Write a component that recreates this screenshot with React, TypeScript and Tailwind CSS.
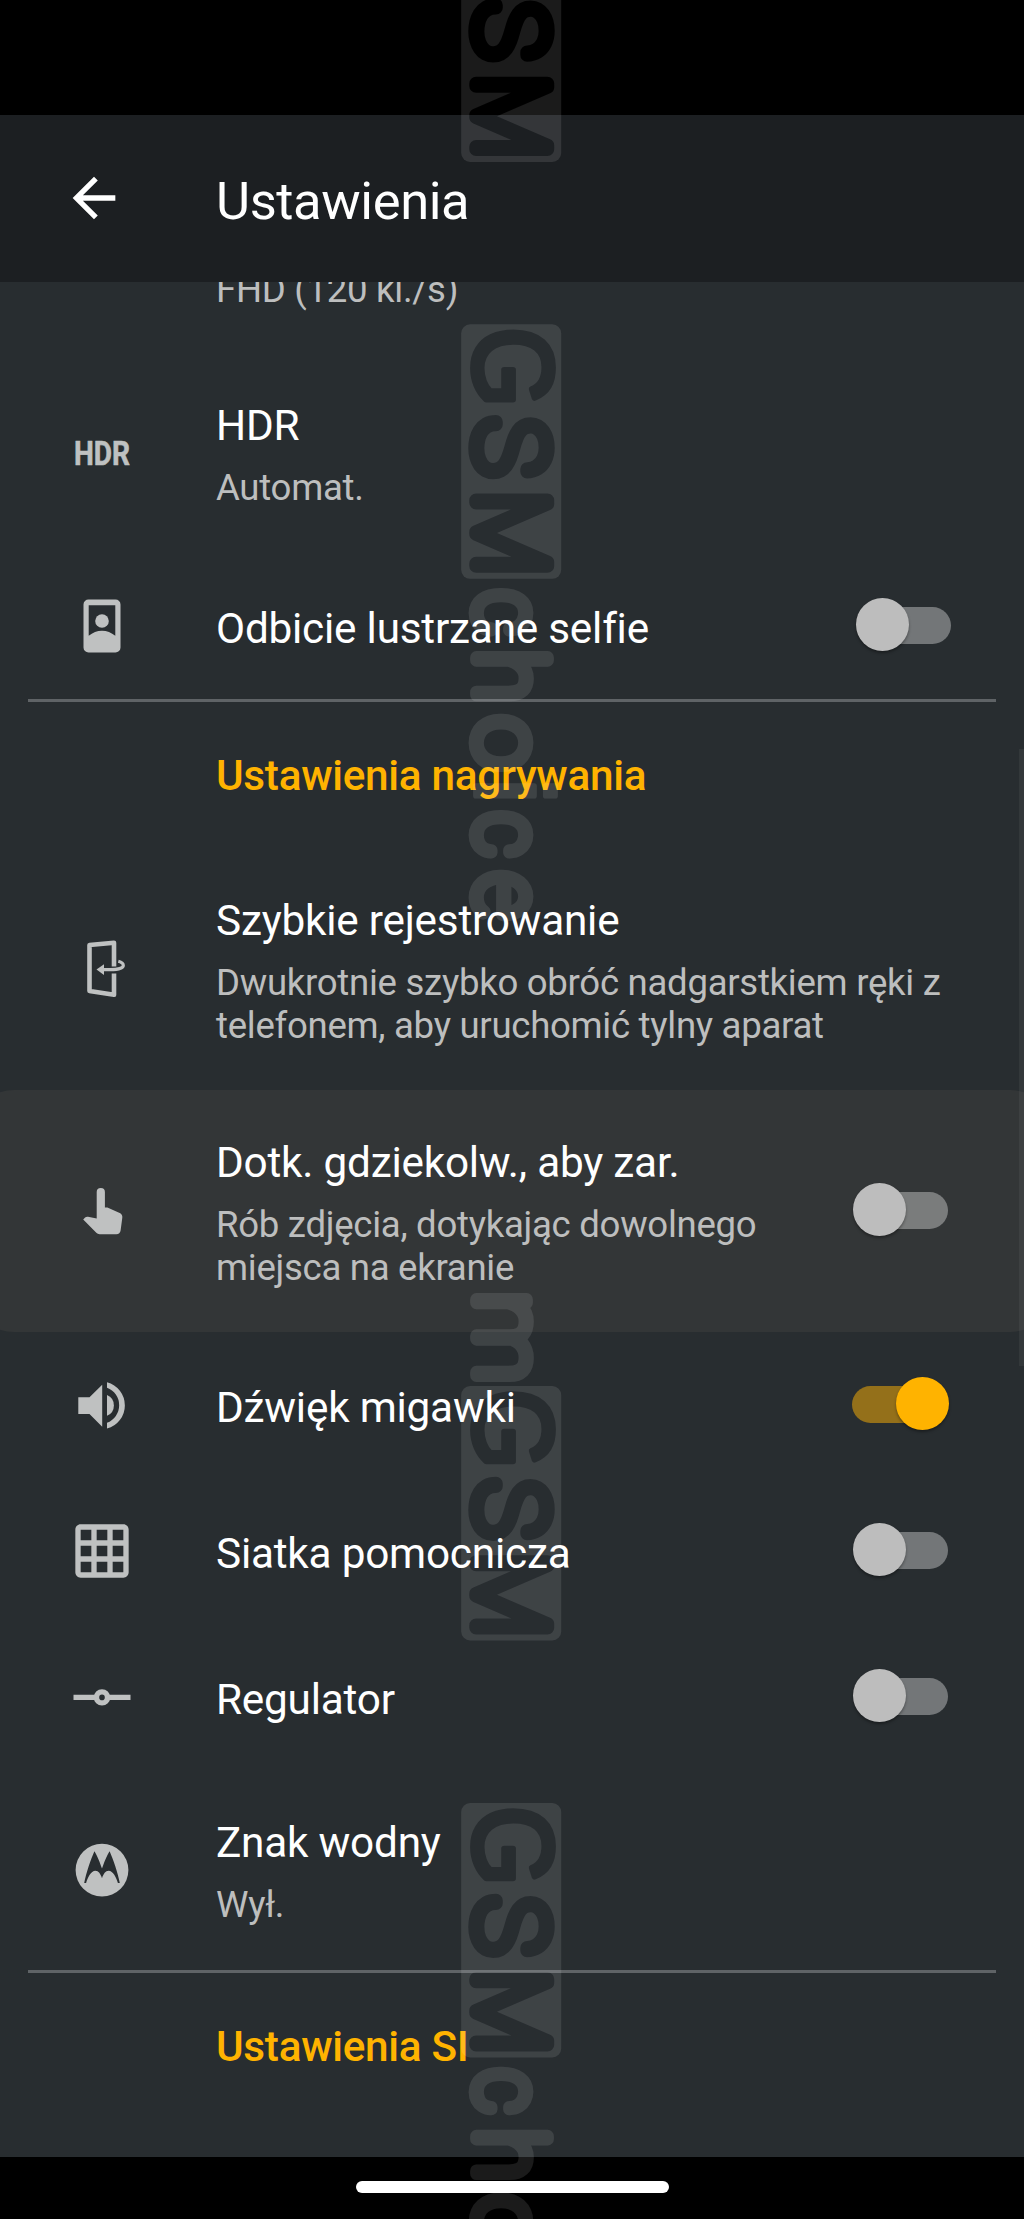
import React from "react";
import { MdArrowBack, MdGridOn } from "react-icons/md";

const ICON = "size-16 shrink-0 text-[#bfc1c1]";

function HdrIcon() {
  return (
    <svg viewBox="0 0 64 64" className={ICON} fill="currentColor">
      <text
        x="4"
        y="44"
        fontFamily="Roboto"
        fontWeight="700"
        fontSize="32.5"
        textLength="56"
        lengthAdjust="spacingAndGlyphs"
        stroke="currentColor"
        strokeWidth="0.6"
      >
        HDR
      </text>
    </svg>
  );
}

function PortraitIcon() {
  return (
    <svg viewBox="0 0 64 64" className={ICON} fill="currentColor">
      <path
        fillRule="evenodd"
        d="M18.500 5.500h27a5 5 0 0 1 5 5v43a5 5 0 0 1-5 5h-27a5 5 0 0 1-5-5v-43a5 5 0 0 1 5-5zM18.700 11.200v30.600c4-3.100 8.400-5 13.300-5s9.300 1.900 13.300 5V11.200z"
      />
      <circle cx="32" cy="27" r="6.800" />
    </svg>
  );
}

function FlipPhoneIcon() {
  return (
    <svg viewBox="0 0 64 64" className={ICON} fill="none" stroke="currentColor">
      <path d="M44 29.500V5.800L19.500 8v46L44 57.800V36.500" strokeWidth="4.600" strokeLinejoin="round" />
      <path d="M33 32.600h7c8 0 13.300-1.600 13.300-4.200 0-1.900-2-3.300-5-4.100" strokeWidth="3.200" />
      <path d="M26.500 32.600 34 27.200v10.800z" fill="currentColor" stroke="none" />
    </svg>
  );
}

function TouchIcon() {
  return (
    <svg viewBox="0 0 64 64" className={ICON} fill="currentColor">
      <path d="M26.700 13a4.100 4.100 0 0 1 8.200 0v15.500h2.500l12.300 5.500c2 1 2.900 2.600 2.600 4.800l-1.700 12.600c-.3 2.400-1.900 3.800-4.200 3.800H29.600c-1.300 0-2.400-.5-3.300-1.400L13.200 40.600l1.900-2c.8-.8 1.800-1.100 2.900-.9l8.700 1.800z" />
    </svg>
  );
}

function VolumeIcon() {
  return (
    <svg viewBox="0 0 64 64" className={ICON} fill="currentColor">
      <path d="M8.300 24.300h11.200L32.200 11.800v42L19.500 40.900H8.300z" />
      <path d="M37 22v20.800a11.300 11.300 0 0 0 0-20.800z" />
      <path d="M37 9.200v5.600a18.600 18.600 0 0 1 0 34.900v5.900a24 24 0 0 0 0-46.400z" />
    </svg>
  );
}

function LevelIcon() {
  return (
    <svg viewBox="0 0 64 64" className={ICON} fill="none" stroke="currentColor" strokeWidth="5.400">
      <path d="M3.500 32.400h21.500M39 32.400h21.500" />
      <circle cx="32" cy="32.400" r="5.500" />
    </svg>
  );
}

function MotoIcon() {
  return (
    <svg viewBox="0 0 64 64" className={ICON} fill="currentColor">
      <path
        fillRule="evenodd"
        d="M32 5.700a26.400 26.400 0 1 1 0 52.800 26.400 26.400 0 0 1 0-52.800zM24.400 13.200C21 21 16 35 14.200 45h1.900c1.700-5.500 4.800-12.200 9.300-12.200 3.100 0 5.100 3 6.600 7.400 1.500-4.400 3.500-7.400 6.600-7.400 4.500 0 7.600 6.700 9.300 12.200h1.900C48 35 43 21 39.600 13.200 36.800 17.500 33.800 25 32 30.600 30.200 25 27.200 17.500 24.400 13.200z"
      />
    </svg>
  );
}

function Switch({ on = false, className = "" }: { on?: boolean; className?: string }) {
  return (
    <div role="switch" aria-checked={on} className={"relative h-[53px] w-[98px] shrink-0 " + className}>
      <div
        className={
          "absolute top-[9px] h-[37px] rounded-full " +
          (on ? "left-0 w-[92px] bg-[#94701a]" : "left-[10px] w-[86px] bg-white/35")
        }
      />
      <div
        className={
          "absolute top-0 size-[53px] rounded-full shadow-[0_2px_3px_rgba(0,0,0,0.35)] " +
          (on ? "left-[44px] bg-[#ffb300]" : "left-[1px] bg-[#bdbdbd]")
        }
      />
    </div>
  );
}

type RowProps = {
  icon: React.ReactNode;
  title: string;
  lines?: string[];
  control?: React.ReactNode;
  className?: string;
};

function Row({ icon, title, lines = [], control, className = "" }: RowProps) {
  return (
    <div className={"flex shrink-0 items-center pr-[74px] pl-[69.500px] " + className}>
      {icon}
      <div className="ml-[82.500px] flex-1 pt-1.5">
        <div className="text-[42.300px] leading-[50px] tracking-[-0.22px] whitespace-nowrap text-white">{title}</div>
        {lines.length > 0 && (
          <div className="mt-4 text-[36.600px] leading-[42.670px] tracking-[-0.29px] whitespace-nowrap text-[#bdbebe]">
            {lines.map((l) => (
              <div key={l}>{l}</div>
            ))}
          </div>
        )}
      </div>
      {control}
    </div>
  );
}

function Section({ children }: { children: React.ReactNode }) {
  return (
    <div className="flex h-[146px] shrink-0 items-center pt-[3px] pl-[216px] text-[42.300px] leading-[50px] font-medium tracking-[-0.3px] text-[#ffb300]">
      {children}
    </div>
  );
}

function Divider() {
  return <div className="mx-7 h-[3px] shrink-0 bg-[#5f6366]" />;
}

const BOX_LETTERS: [string, number, number][] = [
  ["G", 5, 74],
  ["S", 92, 64],
  ["M", 169, 80],
];

const WORD_LETTERS: [string, number, number][] = [
  ["c", 264, 52],
  ["h", 327, 51],
  ["o", 390, 59],
  ["i", 459, 15.5],
  ["c", 486, 52],
  ["e", 546, 54],
];

type Glyph = { font: string; weight: number; size: number; stroke: number; lsb: number; ink: number; sy: number };

const thin = (lsb: number, ink: number, sy = 1): Glyph => ({ font: "Roboto", weight: 100, size: 100, stroke: 13.5, lsb, ink, sy });
const regular = (lsb: number, ink: number, sy = 1): Glyph => ({
  font: "Liberation Sans",
  weight: 400,
  size: 116,
  stroke: 6,
  lsb,
  ink,
  sy,
});

const GLYPHS: Record<string, Glyph> = {
  G: regular(5.5, 77, 0.98),
  S: thin(6, 50),
  M: thin(9.5, 67),
  c: thin(5, 45, 0.94),
  h: thin(8.5, 39, 0.94),
  o: thin(5, 47, 0.94),
  i: regular(7.7, 10.4, 0.95),
  e: thin(5, 45, 0.94),
  m: thin(9, 70, 0.94),
};

function Letter({ ch, x, w, fill }: { ch: string; x: number; w: number; fill: string }) {
  const g = GLYPHS[ch];
  const k = w / (g.ink + g.stroke);
  return (
    <text
      transform={`translate(${x + (g.stroke / 2 - g.lsb) * k} ${ch === "G" ? 1.5 : 0}) scale(${k} ${g.sy})`}
      fontFamily={g.font}
      fontWeight={g.weight}
      fontSize={g.size}
      fill={fill}
      stroke={fill}
      strokeWidth={g.stroke}
      strokeLinejoin="round"
    >
      {ch}
    </text>
  );
}

function Mark({ y, word = false, tail = false }: { y: number; word?: boolean; tail?: boolean }) {
  const id = `mark-${Math.round(y + 200)}`;
  return (
    <g transform={`translate(475.7 ${y}) rotate(90)`}>
      <mask id={id} maskUnits="userSpaceOnUse" x="-120" y="-120" width="900" height="200">
        <rect x="0" y="-85.500" width="254.500" height="100" rx="9" fill="white" />
        {BOX_LETTERS.map(([ch, x, w]) => (
          <Letter key={ch} ch={ch} x={x} w={w} fill="black" />
        ))}
        {word && WORD_LETTERS.map(([ch, x, w]) => <Letter key={x} ch={ch} x={x} w={w} fill="white" />)}
        {tail && <Letter ch="m" x={-92} w={85} fill="white" />}
      </mask>
      <rect x="-120" y="-120" width="900" height="200" fill="white" fillOpacity="0.105" mask={`url(#${id})`} />
    </g>
  );
}

function Watermark() {
  return (
    <svg viewBox="0 0 1024 2219" className="pointer-events-none absolute inset-0 h-full w-full">
      <Mark y={-92.5} />
      <Mark y={324.3} word />
      <Mark y={1386} tail />
      <Mark y={1803} word />
    </svg>
  );
}

export default function App() {
  return (
    <div className="relative flex h-[2219px] w-[1024px] flex-col overflow-hidden bg-black font-['Roboto',sans-serif]">
      <div className="h-[115px] shrink-0" />
      <header className="flex h-[166.500px] shrink-0 items-center bg-[#1c1f22] pl-[62px]">
        <MdArrowBack className="size-16 text-white" />
        <h1 className="ml-[90px] pt-1.5 text-[52.500px] leading-[62px] tracking-[-0.4px] text-white">Ustawienia</h1>
      </header>

      <main className="relative flex h-[875px] flex-1 flex-col overflow-hidden bg-[#282d30]">
        <div className="-mt-[14px] h-[85px] shrink-0 pl-[216px] text-[36.600px] leading-[43px] tracking-[-0.29px] text-[#bdbebe]">
          FHD (120 kl./s)
        </div>
        <Row className="h-[200px]" icon={<HdrIcon />} title="HDR" lines={["Automat."]} />
        <Row
          className="h-[146px]"
          icon={<PortraitIcon />}
          title="Odbicie lustrzane selfie"
          control={<Switch className="-mt-[2px] -mr-[2.500px]" />}
        />
        <Divider />
        <Section>Ustawienia nagrywania</Section>
        <Row
          className="h-[242px]"
          icon={<FlipPhoneIcon />}
          title="Szybkie rejestrowanie"
          lines={["Dwukrotnie szybko obróć nadgarstkiem ręki z", "telefonem, aby uruchomić tylny aparat"]}
        />
        <div className="-mx-8 shrink-0 rounded-[46px] bg-[#333637] px-8">
          <Row
            className="h-[242px]"
            icon={<TouchIcon />}
            title="Dotk. gdziekolw., aby zar."
            lines={["Rób zdjęcia, dotykając dowolnego", "miejsca na ekranie"]}
            control={<Switch className="-mt-[2px]" />}
          />
        </div>
        <Row className="h-[146px]" icon={<VolumeIcon />} title="Dźwięk migawki" control={<Switch on className="-mt-[2px]" />} />
        <Row
          className="h-[146px]"
          icon={<MdGridOn className={ICON} />}
          title="Siatka pomocnicza"
          control={<Switch className="-mt-[2px]" />}
        />
        <Row className="h-[146px]" icon={<LevelIcon />} title="Regulator" control={<Switch className="-mt-[2px]" />} />
        <Row className="h-[200px]" icon={<MotoIcon />} title="Znak wodny" lines={["Wył."]} />
        <Divider />
        <Section>Ustawienia SI</Section>
        <div className="absolute top-[467.500px] right-0 h-[617px] w-[5.500px] bg-white/5" />
      </main>

      <footer className="flex h-[62.500px] shrink-0 items-start justify-center pt-[24.500px]">
        <div className="h-[12px] w-[313px] rounded-full bg-white" />
      </footer>
      <Watermark />
    </div>
  );
}
